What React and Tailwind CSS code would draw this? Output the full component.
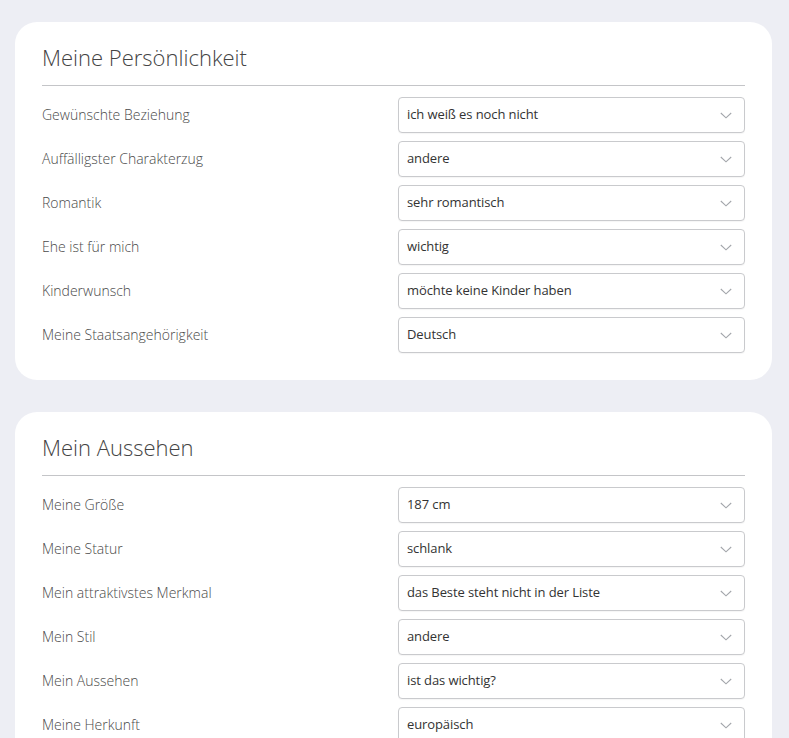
const sections = [
  {
    title: 'Meine Persönlichkeit',
    rows: [
      ['Gewünschte Beziehung', 'ich weiß es noch nicht'],
      ['Auffälligster Charakterzug', 'andere'],
      ['Romantik', 'sehr romantisch'],
      ['Ehe ist für mich', 'wichtig'],
      ['Kinderwunsch', 'möchte keine Kinder haben'],
      ['Meine Staatsangehörigkeit', 'Deutsch'],
    ],
  },
  {
    title: 'Mein Aussehen',
    rows: [
      ['Meine Größe', '187 cm'],
      ['Meine Statur', 'schlank'],
      ['Mein attraktivstes Merkmal', 'das Beste steht nicht in der Liste'],
      ['Mein Stil', 'andere'],
      ['Mein Aussehen', 'ist das wichtig?'],
      ['Meine Herkunft', 'europäisch'],
    ],
  },
];

function Chevron() {
  return (
    <svg width="12" height="7" viewBox="0 0 12 7" fill="none" className="shrink-0">
      <path d="M0.8 1 L6 5.8 L11.2 1" stroke="#a3a6ab" strokeWidth="1.1" />
    </svg>
  );
}

function SelectBox({ value }) {
  return (
    <div className="w-[347px] h-[36px] flex items-center justify-between pl-[8px] pr-[12px] bg-white border border-[#c9cacd] rounded-[4px] text-[13px] tracking-[-0.1px] text-[#333] shadow-[0_1px_1px_rgba(0,0,0,0.04)]">
      <span>{value}</span>
      <Chevron />
    </div>
  );
}

function Card({ title, rows }) {
  return (
    <div className="w-[757px] bg-white rounded-[22px] px-[27px] pt-[20px] pb-[27px]">
      <div className="border-b border-[#c4c5c8] pb-[13px]">
        <h2 className="text-[22px] leading-[30px] font-light text-[#444]">{title}</h2>
      </div>
      <div className="mt-[11px] flex flex-col gap-[8px]">
        {rows.map(([label, value]) => (
          <div key={label} className="flex items-center justify-between">
            <span className="text-[14px] leading-[20px] font-light text-[#4a4a4a]">{label}</span>
            <SelectBox value={value} />
          </div>
        ))}
      </div>
    </div>
  );
}

export default function App() {
  return (
    <div
      className="min-h-screen bg-[#edeef4] pl-[15px] pt-[22px] pb-8 flex flex-col gap-[32px]"
      style={{ fontFamily: '"Open Sans", "Noto Sans", sans-serif' }}
    >
      {sections.map(s => (
        <Card key={s.title} title={s.title} rows={s.rows} />
      ))}
    </div>
  );
}
